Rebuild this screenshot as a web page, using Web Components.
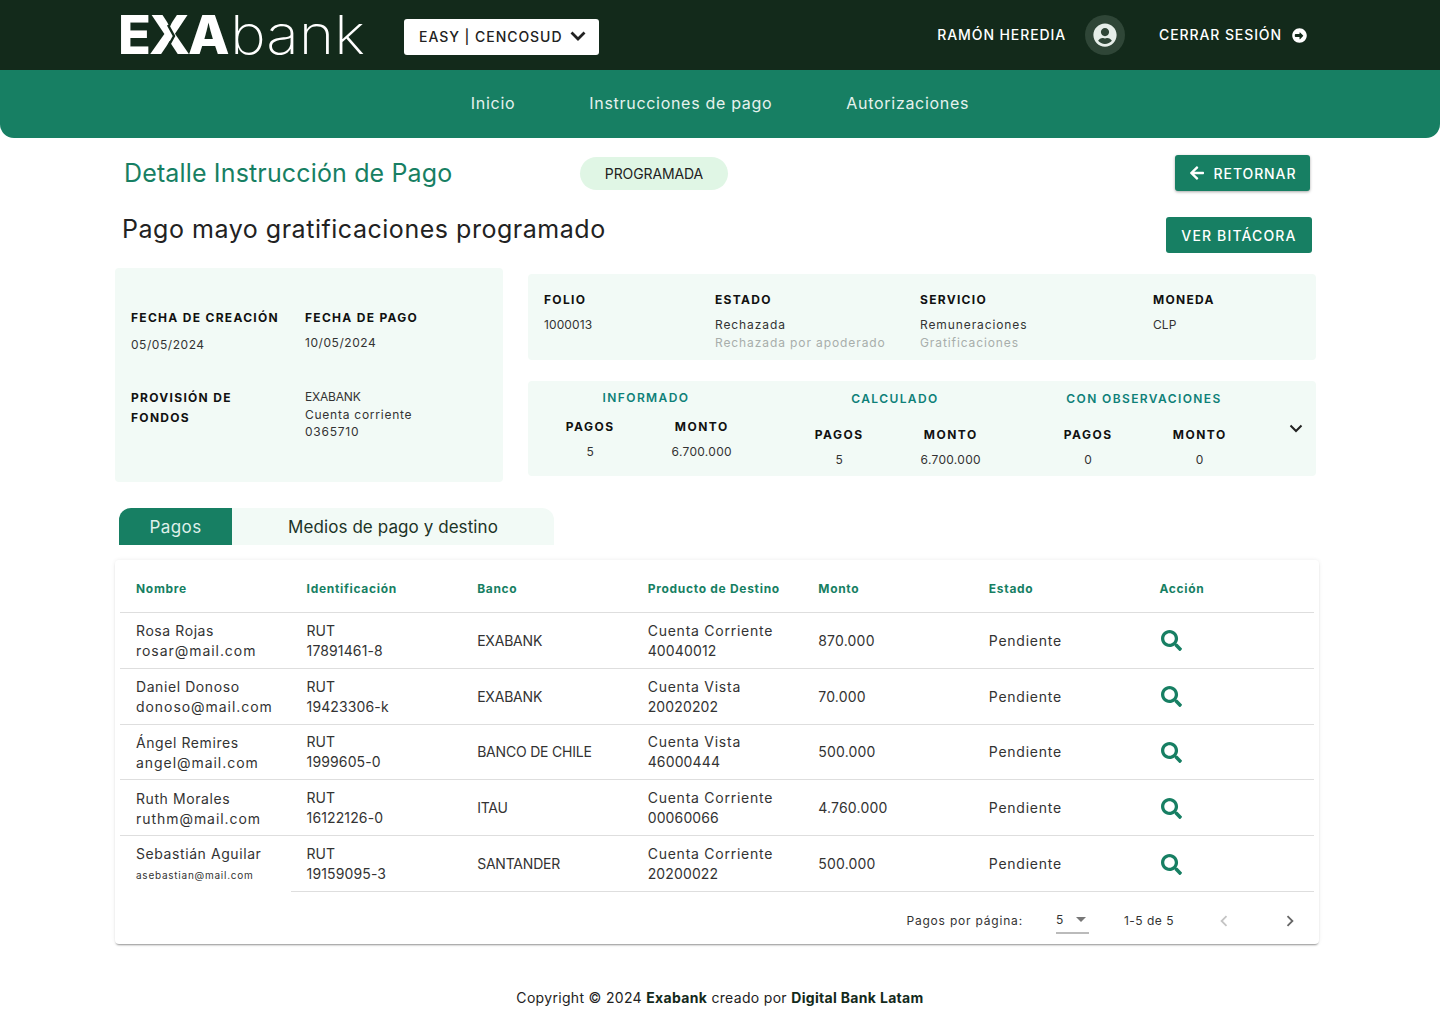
<!DOCTYPE html>
<html lang="es">
<head>
<meta charset="utf-8">
<title>Detalle Instrucción de Pago</title>
<style>
  html, body { margin: 0; background: #fff; }
  body { font-family: Inter, "Noto Sans", sans-serif; color: #222; width: 1440px; }
</style>
</head>
<body>
<exa-header></exa-header>
<exa-nav></exa-nav>
<exa-detail-head></exa-detail-head>
<exa-detail-cards></exa-detail-cards>
<exa-tabs></exa-tabs>
<exa-payments></exa-payments>
<exa-footer></exa-footer>

<script>
const icons = {
  user: '<svg viewBox="0 0 496 512" width="24" height="24" fill="currentColor"><path d="M248 8C111 8 0 119 0 256s111 248 248 248 248-111 248-248S385 8 248 8zm0 96c48.6 0 88 39.4 88 88s-39.4 88-88 88-88-39.4-88-88 39.4-88 88-88zm0 344c-58.7 0-111.3-26.6-146.5-68.2 18.8-35.4 55.6-59.8 98.5-59.8 2.4 0 4.8.4 7.1 1.1 13 4.2 26.6 6.9 40.9 6.9 14.3 0 28-2.7 40.9-6.9 2.3-.7 4.7-1.1 7.1-1.1 42.9 0 79.7 24.4 98.5 59.8C359.3 421.4 306.7 448 248 448z"/></svg>',
  exit: '<svg viewBox="0 0 512 512" width="15" height="15" fill="currentColor"><path d="M256 8c137 0 248 111 248 248S393 504 256 504 8 393 8 256 119 8 256 8zM120 208c-13.3 0-24 10.7-24 24v48c0 13.3 10.7 24 24 24h136v68c0 10.7 13 16 20.5 8.5l104-104c4.7-4.7 4.7-12.3 0-17l-104-104c-7.5-7.5-20.5-2.2-20.5 8.5v44.5z"/></svg>',
  back: '<svg viewBox="0 0 448 512" width="16" height="16" fill="currentColor"><path d="M257.5 445.1l-22.2 22.2c-9.4 9.4-24.6 9.4-33.9 0L7 273c-9.4-9.4-9.4-24.6 0-33.9L201.4 44.7c9.4-9.4 24.6-9.4 33.9 0l22.2 22.2c9.5 9.5 9.3 25-.4 34.3L136.6 216H424c13.3 0 24 10.7 24 24v32c0 13.3-10.7 24-24 24H136.6l120.5 114.8c9.8 9.3 10 24.8.4 34.3z"/></svg>',
  search: '<svg viewBox="0 0 512 512" width="21" height="21" fill="currentColor"><path d="M505 442.7L405.3 343c-4.5-4.5-10.6-7-17-7H372c27.6-35.3 44-79.7 44-128C416 93.1 322.9 0 208 0S0 93.1 0 208s93.1 208 208 208c48.3 0 92.7-16.4 128-44v16.3c0 6.4 2.5 12.5 7 17l99.7 99.7c9.4 9.4 24.6 9.4 33.9 0l28.3-28.3c9.4-9.4 9.4-24.6.1-34zM208 336c-70.7 0-128-57.2-128-128 0-70.7 57.2-128 128-128 70.7 0 128 57.2 128 128 0 70.7-57.2 128-128 128z"/></svg>'
}

// Registers a custom element whose shadow root comes from a template string.
function define (name, html, setup) {
  const template = document.createElement('template')
  template.innerHTML = html
  customElements.define(name, class extends HTMLElement {
    constructor () {
      super()
      this.attachShadow({ mode: 'open' }).appendChild(template.content.cloneNode(true))
      if (setup) setup(this.shadowRoot, this)
    }
  })
}

define('exa-header', `<style>
  :host { display: flex; align-items: center; height: 70px; padding: 0 133px 0 118px; background: #132a1b; color: #fff; }
  .logo { display: flex; align-items: baseline; width: 286px; margin-top: -1px; line-height: 1; font-size: 54px; }
  .exa { position: relative; font-weight: 800; letter-spacing: -2px; }
  .cut { position: absolute; left: 0; top: 0; }
  .bank { font-weight: 200; margin-left: 2px; transform: scaleX(1.12); transform-origin: left; }
  .org { display: flex; align-items: center; justify-content: space-between; box-sizing: border-box; width: 195px; height: 36px; margin-top: 4px; padding: 0 13px 2px 15px; background: #fff; border-radius: 3px; color: #222; font-size: 14px; font-weight: 500; letter-spacing: 0.95px; white-space: nowrap; }
  .user { margin: 0 0 2px auto; font-size: 14px; font-weight: 500; letter-spacing: 0.9px; }
  .avatar { display: flex; align-items: center; justify-content: center; width: 40px; height: 40px; margin: 0 34px 0 19px; border-radius: 50%; background: #2f4637; color: #e6eee9; }
  .logout { margin-bottom: 2px; font-size: 14px; font-weight: 500; letter-spacing: 0.9px; }
  .exit { display: flex; margin-left: 10px; }
</style>
<div class="logo"><span class="exa">EXA<svg class="cut" width="110" height="54" viewBox="0 0 110 54" fill="none" stroke="#132a1b" stroke-width="2.4"><path d="M50 17l6 11-6 11"/></svg></span><span class="bank">bank</span></div>
<div class="org"><span>EASY | CENCOSUD</span>
  <svg width="16" height="10" viewBox="0 0 16 10" fill="none" stroke="#222" stroke-width="2.8"><path d="M1.5 1.5L8 8l6.5-6.5"/></svg></div>
<span class="user">RAMÓN HEREDIA</span>
<span class="avatar">${icons.user}</span>
<span class="logout">CERRAR SESIÓN</span>
<span class="exit">${icons.exit}</span>`)

define('exa-nav', `<style>
  :host { display: flex; justify-content: center; align-items: center; gap: 74px; box-sizing: border-box; height: 68px; padding-bottom: 2px; background: #177f63; border-radius: 0 0 14px 14px; color: #e6f2ee; font-size: 16px; letter-spacing: 0.7px; }
</style>
<span>Inicio</span><span>Instrucciones de pago</span><span>Autorizaciones</span>`)

define('exa-button', `<style>
  :host { display: inline-flex; align-items: center; justify-content: center; gap: 9px; box-sizing: border-box; height: 36px; background: #177f63; color: #fff; border-radius: 3px; font-size: 14px; font-weight: 500; letter-spacing: var(--btn-spacing, 1px); box-shadow: var(--btn-shadow, none); }
</style><slot></slot>`)

define('exa-detail-head', `<style>
  :host { display: block; }
  .row { display: flex; align-items: center; }
  .one { height: 36px; margin: 17px 130px 0 124px; }
  .two { height: 36px; margin: 26px 128px 0 122px; justify-content: space-between; }
  h1 { width: 456px; margin: 0; color: #177f63; font-size: 25px; font-weight: 400; letter-spacing: 0.15px; }
  h2 { margin: 0 0 12px; color: #222; font-size: 25px; font-weight: 400; letter-spacing: 0.53px; }
  .chip { display: flex; align-items: center; justify-content: center; width: 148px; height: 33px; border-radius: 17px; background: #e0f6e5; color: #222; font-size: 14px; letter-spacing: -0.1px; }
  .ret { width: 135px; margin-left: auto; --btn-spacing: 0.9px; --btn-shadow: 0 1px 3px rgba(0,0,0,.35); }
  .bit { width: 146px; --btn-spacing: 1.15px; }
  .ret svg { display: block; }
</style>
<div class="row one">
  <h1>Detalle Instrucción de Pago</h1>
  <span class="chip">PROGRAMADA</span>
  <exa-button class="ret">${icons.back}<span>RETORNAR</span></exa-button>
</div>
<div class="row two">
  <h2>Pago mayo gratificaciones programado</h2>
  <exa-button class="bit">VER BITÁCORA</exa-button>
</div>`)

define('exa-detail-cards', `<style>
  :host { display: flex; align-items: flex-start; margin: 15px 0 0 115px; gap: 25px; font-size: 12px; color: #333; }
  .card { background: #f2faf6; border-radius: 4px; box-sizing: border-box; }
  .label { color: #111; font-weight: 700; letter-spacing: 1.3px; }
  .info { display: grid; grid-template-columns: 174px 180px; grid-template-rows: 78px 90px; width: 388px; height: 214px; padding: 42px 0 0 16px; }
  .info .val { margin-top: 12px; letter-spacing: 0.55px; }
  .info .lh { line-height: 20px; }
  .info .pay { margin-top: 10px; }
  .multi { line-height: 17.5px; letter-spacing: 0.75px; }
  .caps { letter-spacing: -0.2px; }
  .side { display: flex; flex-direction: column; gap: 21px; margin-top: 6px; width: 788px; }
  .meta { display: grid; grid-template-columns: 171px 205px 233px 1fr; height: 86px; padding: 18px 16px 0; }
  .meta .val { margin-top: 9px; line-height: 17.5px; letter-spacing: 0.9px; }
  .meta .num { letter-spacing: 0.1px; }
  .muted { color: #a8aeab; }
  .totals { display: flex; position: relative; height: 95px; padding: 0 0 0 6.5px; gap: 26px; }
</style>
<div class="card info">
  <div><div class="label">FECHA DE CREACIÓN</div><div class="val">05/05/2024</div></div>
  <div><div class="label">FECHA DE PAGO</div><div class="val pay">10/05/2024</div></div>
  <div class="label lh">PROVISIÓN DE<br>FONDOS</div>
  <div class="multi"><span class="caps">EXABANK</span><br>Cuenta corriente<br>0365710</div>
</div>
<div class="side">
  <div class="card meta">
    <div><div class="label">FOLIO</div><div class="val num">1000013</div></div>
    <div><div class="label">ESTADO</div><div class="val">Rechazada<br><span class="muted">Rechazada por apoderado</span></div></div>
    <div><div class="label">SERVICIO</div><div class="val">Remuneraciones<br><span class="muted">Gratificaciones</span></div></div>
    <div><div class="label">MONEDA</div><div class="val num">CLP</div></div>
  </div>
  <div class="card totals">
    <exa-total title="INFORMADO" pagos="5" monto="6.700.000" top="9" drop="13"></exa-total>
    <exa-total title="CALCULADO" pagos="5" monto="6.700.000" top="10" drop="20"></exa-total>
    <exa-total title="CON OBSERVACIONES" pagos="0" monto="0" top="10" drop="20"></exa-total>
    <exa-chevron></exa-chevron>
  </div>
</div>`)

define('exa-chevron', `<style>
  :host { position: absolute; right: 13px; top: 43px; display: block; line-height: 0; }
</style>
<svg width="14" height="9" viewBox="0 0 14 9" fill="none" stroke="#222" stroke-width="2"><path d="M1.5 1.5L7 7l5.5-5.5"/></svg>`)

define('exa-total', `<style>
  :host { display: block; width: 223px; font-size: 12px; text-align: center; color: #333; }
  .title { color: #0e8078; font-weight: 600; letter-spacing: 1.4px; line-height: 16px; }
  .cols { display: grid; grid-template-columns: 1fr 1fr; }
  .label { color: #111; font-weight: 700; letter-spacing: 1.5px; line-height: 16px; }
  .val { margin-top: 9px; line-height: 16px; letter-spacing: 0.3px; }
</style>
<div class="title"></div>
<div class="cols">
  <div><div class="label">PAGOS</div><div class="val pagos"></div></div>
  <div><div class="label">MONTO</div><div class="val monto"></div></div>
</div>`, (root, host) => {
  root.querySelector('.title').textContent = host.getAttribute('title')
  root.querySelector('.title').style.marginTop = host.getAttribute('top') + 'px'
  root.querySelector('.cols').style.marginTop = host.getAttribute('drop') + 'px'
  root.querySelector('.pagos').textContent = host.getAttribute('pagos')
  root.querySelector('.monto').textContent = host.getAttribute('monto')
})

define('exa-tabs', `<style>
  :host { display: flex; width: 435px; height: 37px; margin: 26px 0 0 119px; background: #f2faf6; border-radius: 12px 12px 0 0; font-size: 17px; letter-spacing: 0.08px; color: #1c3327; }
  span { display: flex; align-items: center; justify-content: center; }
  .on { width: 113px; background: #177f63; color: #dff0ea; border-radius: 12px 0 0 0; letter-spacing: 0.45px; }
  .off { flex: 1; }
</style>
<span class="on">Pagos</span><span class="off">Medios de pago y destino</span>`)

const rows = [
  ['Rosa Rojas', 'rosar@mail.com', '17891461-8', 'EXABANK', 'Cuenta Corriente', '40040012', '870.000'],
  ['Daniel Donoso', 'donoso@mail.com', '19423306-k', 'EXABANK', 'Cuenta Vista', '20020202', '70.000'],
  ['Ángel Remires', 'angel@mail.com', '1999605-0', 'BANCO DE CHILE', 'Cuenta Vista', '46000444', '500.000'],
  ['Ruth Morales', 'ruthm@mail.com', '16122126-0', 'ITAU', 'Cuenta Corriente', '00060066', '4.760.000'],
  ['Sebastián Aguilar', 'asebastian@mail.com', '19159095-3', 'SANTANDER', 'Cuenta Corriente', '20200022', '500.000']
]

define('exa-payments', `<style>
  :host { display: block; width: 1204px; height: 384px; margin: 15px 0 0 115px; background: #fff; border-radius: 4px; box-shadow: 0 2px 2px -1px rgba(0,0,0,.4), 0 0 4px rgba(0,0,0,.08); font-size: 14px; color: #333; }
  .grid { display: grid; grid-template-columns: repeat(7, 170.57px); margin: 0 5px; }
  .cell { display: flex; flex-direction: column; justify-content: center; box-sizing: border-box; height: 55.8px; padding: 1px 0 0 16px; line-height: 20px; letter-spacing: 0.75px; border-bottom: 1px solid #dedede; white-space: nowrap; }
  .head { height: 53px; padding-top: 6px; color: #177f63; font-size: 12px; font-weight: 700; letter-spacing: 0.7px; }
  .low { padding-top: 3px; }
  .name { letter-spacing: 0.58px; }
  .mail { letter-spacing: 0.95px; }
  .small { font-size: 10px; letter-spacing: 0.75px; line-height: 22px; }
  .num { letter-spacing: 0.13px; }
  .rut { letter-spacing: 0; }
  .caps { letter-spacing: -0.2px; }
  .amount { letter-spacing: 0.2px; }
  .nob { border-bottom-color: transparent; }
  .icon { color: #177f63; line-height: 0; padding-left: 18px; }
  .icon svg { display: block; }
</style>
<div class="grid"></div>
<exa-pager></exa-pager>`, (root) => {
  const heads = ['Nombre', 'Identificación', 'Banco', 'Producto de Destino', 'Monto', 'Estado', 'Acción']
  let html = heads.map(h => `<div class="cell head">${h}</div>`).join('')
  rows.forEach((r, i) => {
    const last = i === rows.length - 1
    // The first column sits a pixel lower from the third row on.
    html += `<div class="cell${i > 1 ? ' low' : ''}${last ? ' nob' : ''}"><span class="name">${r[0]}</span><span class="${last ? 'small' : 'mail'}">${r[1]}</span></div>
      <div class="cell"><span class="rut">RUT</span><span class="num">${r[2]}</span></div>
      <div class="cell"><span class="caps">${r[3]}</span></div>
      <div class="cell"><span>${r[4]}</span><span class="num">${r[5]}</span></div>
      <div class="cell"><span class="amount">${r[6]}</span></div>
      <div class="cell"><span>Pendiente</span></div>
      <div class="cell icon">${icons.search}</div>`
  })
  root.querySelector('.grid').innerHTML = html
})

define('exa-pager', `<style>
  :host { display: flex; align-items: center; justify-content: flex-end; box-sizing: border-box; height: 52px; padding: 6px 21px 0 0; font-size: 12px; letter-spacing: 0.8px; color: #333; }
  .select { display: flex; align-items: center; justify-content: space-between; box-sizing: border-box; width: 33px; height: 27px; margin: 0 35px 0 33px; border-bottom: 2px solid #bbb; padding: 0 3px 0 0; }
  .range { letter-spacing: 0.5px; }
  .arrow { width: 0; height: 0; border: 5px solid transparent; border-top-color: #777; border-bottom: 0; }
  .prev { margin-left: 42px; color: #c4c4c4; line-height: 0; }
  .next { margin-left: 50px; color: #666; line-height: 0; }
</style>
<span>Pagos por página:</span>
<span class="select"><span>5</span><span class="arrow"></span></span>
<span class="range">1-5 de 5</span>
<span class="prev"><svg width="16" height="16" viewBox="0 0 16 16" fill="none" stroke="currentColor" stroke-width="1.8"><path d="M10.5 3.2L5.6 8l4.9 4.8"/></svg></span>
<span class="next"><svg width="16" height="16" viewBox="0 0 16 16" fill="none" stroke="currentColor" stroke-width="1.8"><path d="M5.5 3.2L10.4 8l-4.9 4.8"/></svg></span>`)

define('exa-footer', `<style>
  :host { display: block; margin-top: 44px; text-align: center; font-size: 14px; line-height: 20px; color: #222; letter-spacing: 0.32px; }
  b { font-weight: 700; color: #132a1b; }
</style>
Copyright © 2024 <b>Exabank</b> creado por <b>Digital Bank Latam</b>`)
</script>
</body>
</html>
